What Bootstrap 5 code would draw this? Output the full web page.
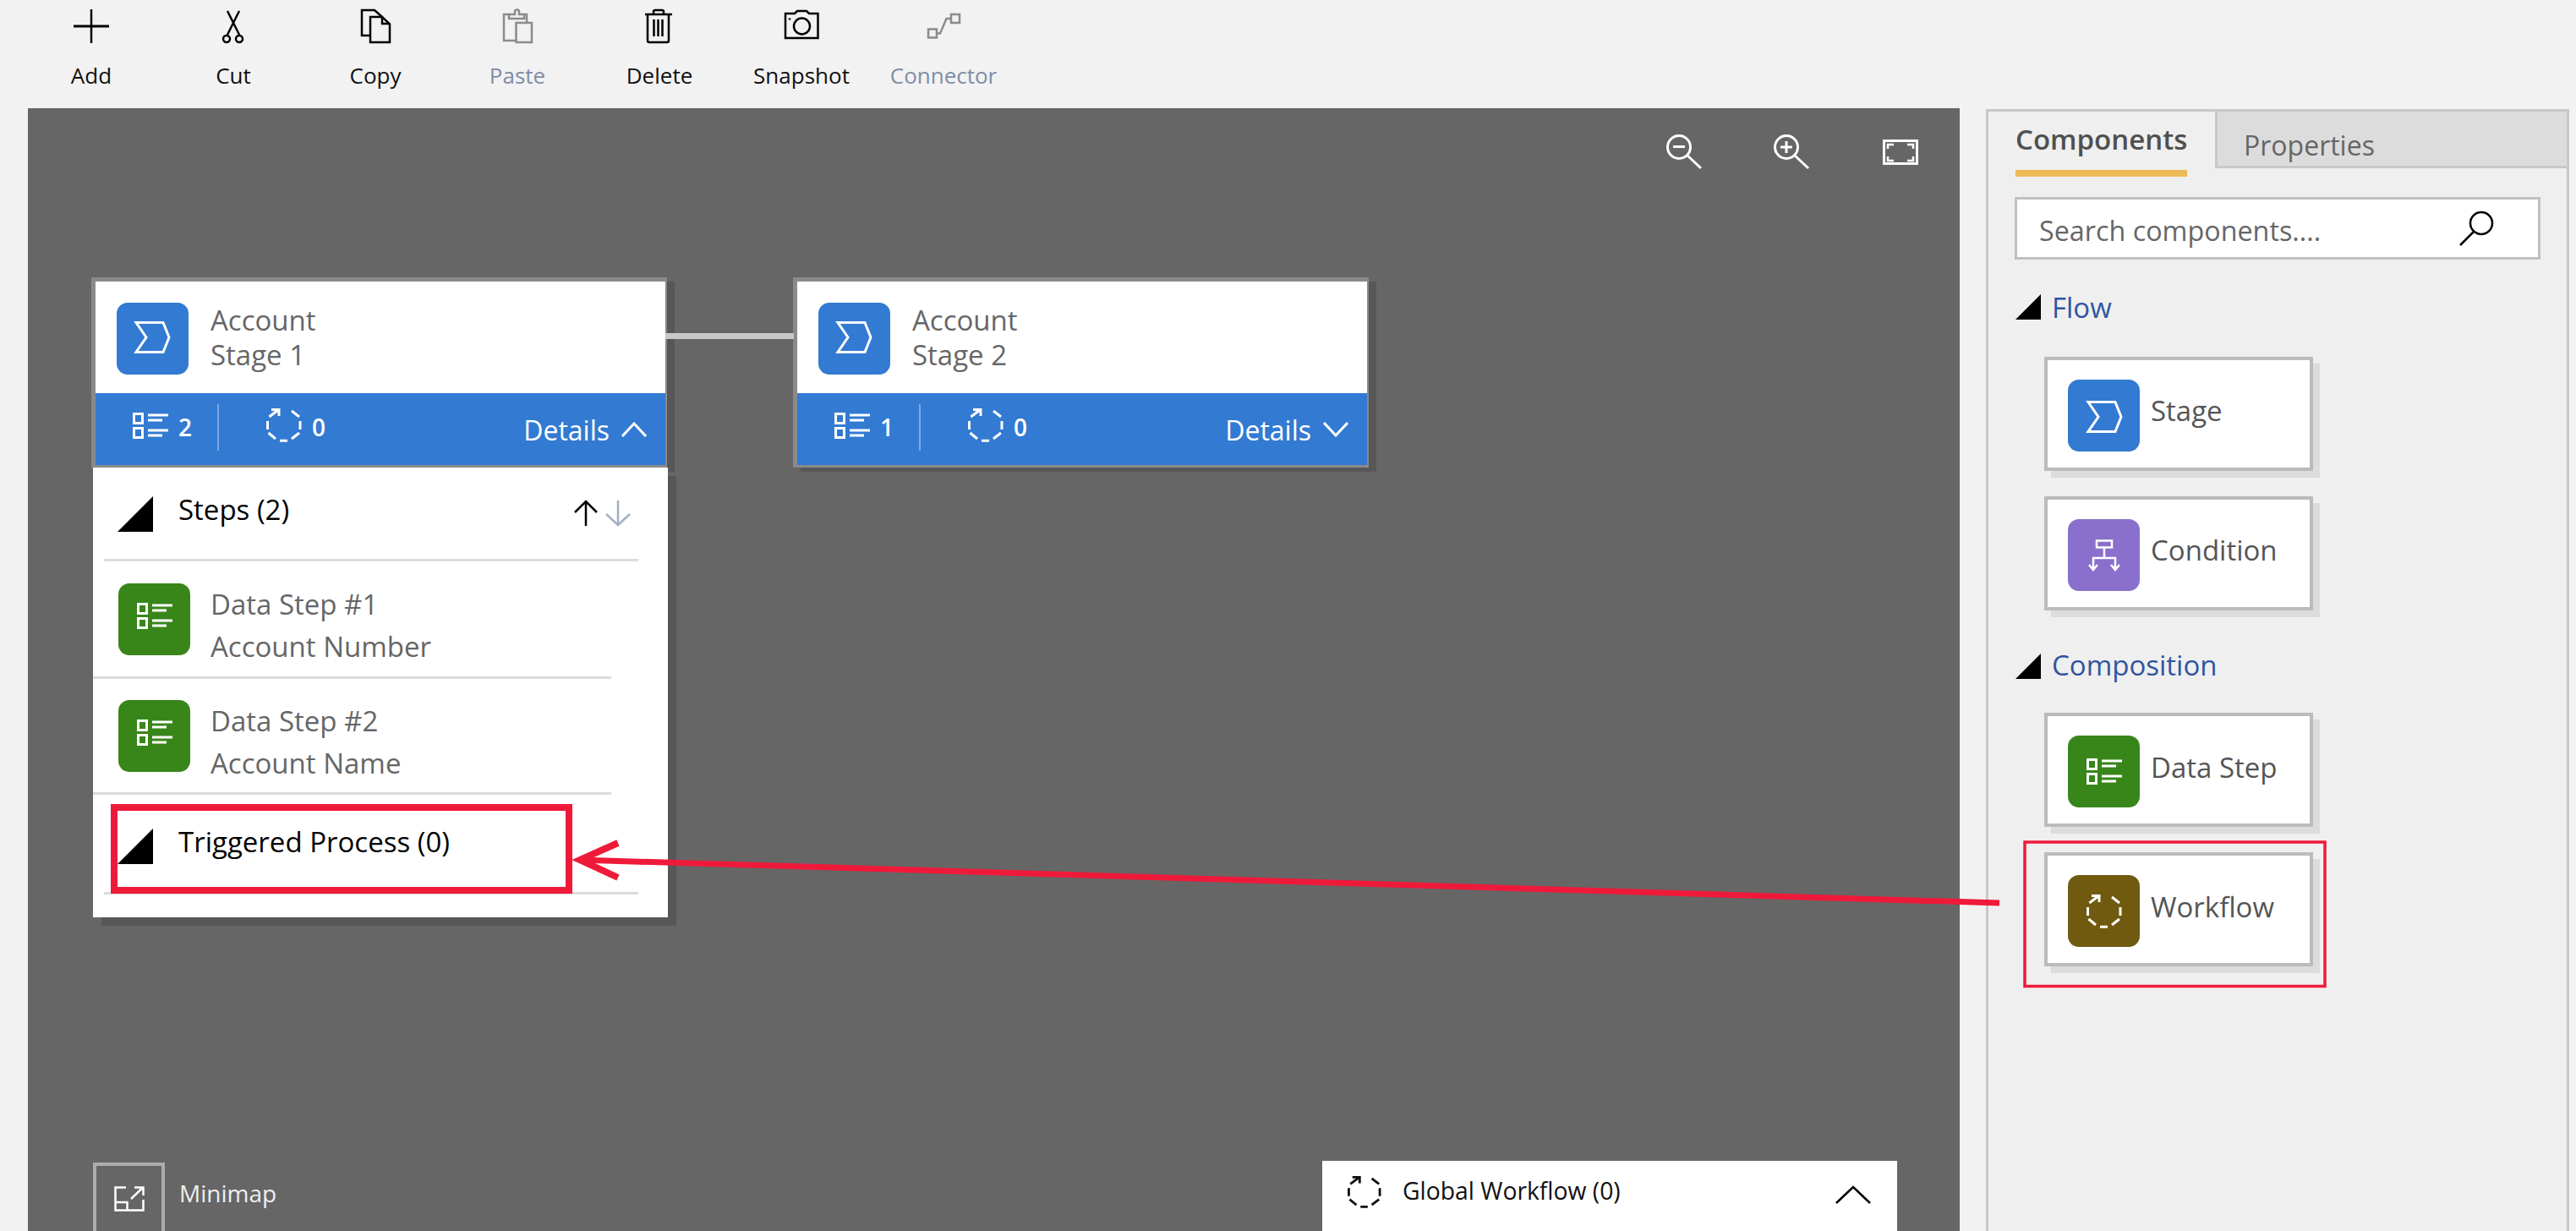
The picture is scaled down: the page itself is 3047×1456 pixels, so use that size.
<!DOCTYPE html>
<html lang="en">
<head>
  <meta charset="UTF-8" />
  <title>Business Process Flow Designer</title>
  <link href="https://cdn.jsdelivr.net/npm/bootstrap@5.3.3/dist/css/bootstrap.min.css" rel="stylesheet" />
  <style>
    html, body { margin: 0; height: 1456px; overflow: hidden; }
    body { background: #f2f2f2; font-family: "Open Sans", "Noto Sans", sans-serif; color: #111; position: relative; }
    svg { display: block; flex: none; }

    /* toolbar */
    .tool-bar { height: 128px; padding-left: 24px; }
    .tool-item { width: 168px; font-size: 26px; line-height: 36px; }
    .tool-item svg { margin: 0 auto 19px; }
    .tool-off { color: #7f8da6; }
    .tool-icon { fill: none; stroke: #000; stroke-width: 2.5; }
    .tool-icon-off { fill: none; stroke: #8b8b8b; stroke-width: 2.5; }

    /* canvas */
    .work-row { height: 1328px; padding-left: 33px; }
    .design-canvas { width: 2285px; background: #666; position: relative; overflow: hidden; }
    .zoom-tools { position: absolute; left: 1922px; top: 25px; }
    .line-link { position: absolute; left: 754px; top: 266px; width: 152px; height: 7px; background: #c8c8c8; z-index: 2; }
    .stage-node { position: absolute; top: 200px; }
    .stage-one { left: 75px; }
    .stage-two { left: 905px; }
    .stage-box { width: 681px; height: 225px; border: solid #8a8a8a; border-width: 5px 2px 3px 5px; background: #fff; box-shadow: 9px 5px 0 #575757; position: relative; }
    .stage-top { height: 132px; padding: 25px 0 0 25px; gap: 26px; }
    .tile { width: 85px; height: 85px; border-radius: 13px; flex: none; }
    .tile-blue { background: #327ad2; }
    .tile-green { background: #38861a; }
    .tile-purple { background: #8a70cc; }
    .tile-brown { background: #705a10; }
    .tile-high { align-items: flex-start !important; padding-top: 23px; }
    .stage-name { font-size: 33px; line-height: 41px; color: #666; }
    .stage-bar { height: 85px; background: #337ad2; color: #fff; }
    .bar-steps { margin: 23px 0 0 44px; }
    .bar-num { font-size: 28px; font-weight: 600; line-height: 30px; margin: 25px 0 0 12px; }
    .bar-split { width: 2px; height: 55px; background: #80a8e0; margin: 13px 0 0 30px; }
    .bar-flow { margin: 18px 0 0 56px; }
    .bar-details { font-size: 32px; line-height: 40px; margin: 24px 22px 0 auto; gap: 14px; }
    .bar-details svg { margin-top: 10px; }

    .stage-panel { width: 680px; height: 532px; margin-left: 2px; background: #fff; box-shadow: 10px 10px 0 #575757; position: relative; }
    .sect-head { font-size: 33px; line-height: 40px; color: #000; }
    .sect-head span { margin-top: -4px; }
    .sect-tri { margin-right: 30px; }
    .sect-steps { height: 108px; padding: 34px 35px 0 29px; }
    .sect-arrows { margin: 3px 6px 0 auto; }
    .sect-line { height: 3px; background: #dcdcdc; margin: 0 35px 0 13px; }
    .step-row { height: 136px; padding: 26px 0 0 30px; gap: 24px; }
    .step-row-two { height: 134px; padding-top: 25px; }
    .step-name { font-size: 33px; line-height: 50px; color: #666; }
    .step-line { height: 3px; width: 613px; background: #dcdcdc; }
    .sect-trigger { height: 115px; padding: 40px 0 0 29px; }

    .mini-map { position: absolute; left: 77px; bottom: 0; color: #eee; font-size: 28px; }
    .mini-box { width: 85px; height: 81px; border: solid #adadad; border-width: 4px 4px 0 4px; }
    .mini-label { margin: -10px 0 0 17px; }
    .global-flow { position: absolute; left: 1531px; top: 1245px; width: 680px; height: 83px; background: #fff; padding: 17px 31px 0 30px; font-size: 28.3px; color: #111; }
    .global-label { line-height: 36px; margin-left: 25px; }
    .global-arrow { margin: 12px 0 0 auto; }

    /* right panel */
    .side-panel { width: 690px; margin-left: 31px; margin-top: 1px; background: #efefef; border: solid #c8c8c8; border-width: 3px 3px 0 3px; }
    .tab-row { height: 67px; }
    .tab-on { width: 268px; height: 67px; padding: 8px 0 0 32px; font-size: 33px; font-weight: 600; color: #505050; }
    .tab-on span { display: inline-block; line-height: 40px; padding-bottom: 16px; border-bottom: 8px solid #edba57; }
    .tab-off { height: 67px; background: #dcdcdc; border-left: 3px solid #c8c8c8; border-bottom: 3px solid #c8c8c8; padding: 20px 0 0 31px; font-size: 32px; line-height: 40px; color: #666; }
    .search-box { width: 622px; height: 74px; margin: 34px 0 0 31px; background: #fff; border: 3px solid #c0c0c0; padding-right: 52px; }
    .search-box .form-control { border: 0; border-radius: 0; background: transparent; box-shadow: none; font-size: 32.3px; padding: 4px 0 0 26px; color: #666; font-family: inherit; }
    .search-box .form-control::placeholder { color: #666; opacity: 1; }
    .group-head { margin: 41px 0 0 32px; gap: 13px; font-size: 33px; line-height: 36px; color: #2f55a0; }
    .group-head span { margin-top: -2px; }
    .group-two { margin-top: 51px; }
    .group-two span { margin-top: -4px; }
    .comp-card { width: 318px; height: 135px; margin: 30px 0 0 66px; background: #fff; border: 4px solid #bbb; box-shadow: 8px 8px 0 #dcdcdc; padding: 23px 0 0 24px; gap: 13px; font-size: 33px; color: #555; }
    .comp-name { line-height: 40px; margin-top: 17px; }
    .comp-name-low { margin-top: 18px; }
    .comp-first { margin-top: 40px; }
    .comp-first-two { margin-top: 38px; }

    .mark-layer { position: absolute; left: 0; top: 0; pointer-events: none; z-index: 5; }
  </style>
</head>
<body>
  <svg width="0" height="0" class="position-absolute">
    <defs>
      <symbol id="ico-steps" viewBox="0 0 42 31">
        <path d="M1.500 1.500h10v11h-10zM1.500 18.500h10v11h-10zM18 3h24M18 9h17M18 21h24M18 27h17" fill="none" stroke="currentColor" stroke-width="3"/>
      </symbol>
      <symbol id="ico-flow" viewBox="0 0 42 40">
        <path d="M30 3l9 7M40 15v10M39 29l-9 7M25 38.300h-9M11 36l-8.500-7M1.500 25V15M3.400 10L14 2M6 1.500h9V9" fill="none" stroke="currentColor" stroke-width="3"/>
      </symbol>
      <symbol id="ico-stage" viewBox="0 0 85 85">
        <path d="M23 23.500h32l7 17.500-7 17.500H23l12-17.500z" fill="none" stroke="#fff" stroke-width="3"/>
      </symbol>
      <symbol id="ico-tri" viewBox="0 0 42 42">
        <path d="M42 0V42H0z" fill="currentColor"/>
      </symbol>
    </defs>
  </svg>

  <!-- Barra de herramientas -->
  <div class="tool-bar d-flex">
    <div class="tool-item text-center">
      <svg width="60" height="52" viewBox="78 0 60 52" class="tool-icon"><path d="M108 11v40"/><path d="M87 31h42" stroke-width="3"/></svg>
      Add
    </div>
    <div class="tool-item text-center">
      <svg width="60" height="52" viewBox="246 0 60 52" class="tool-icon"><path d="M269 13l14 28M283 13l-14 28"/><circle cx="268" cy="46" r="4"/><circle cx="283" cy="46" r="4"/></svg>
      Cut
    </div>
    <div class="tool-item text-center">
      <svg width="60" height="52" viewBox="414 0 60 52" class="tool-icon"><path d="M437 42h-9V12h15l9 8"/><path d="M438 20h14l9 8.500V50h-23z"/><path d="M452 20v8h9"/></svg>
      Copy
    </div>
    <div class="tool-item text-center tool-off">
      <svg width="60" height="52" viewBox="582 0 60 52" class="tool-icon-off"><path d="M610 48h-14V17h6M616 17h7v9M602 17v5h18v-5h-6v-3a2.500 2.500 0 0 0-5 0v3z"/><path d="M610.500 27h18.500v23h-18.500z"/></svg>
      Paste
    </div>
    <div class="tool-item text-center">
      <svg width="60" height="52" viewBox="750 0 60 52" class="tool-icon"><path d="M763 17h32M773 16v-2a2 2 0 0 1 2-2h8a2 2 0 0 1 2 2v2"/><path d="M766 17v31a2 2 0 0 0 2 2h21a2 2 0 0 0 2-2V17"/><path d="M773.500 23v20M778.500 23v20M783.500 23v20"/></svg>
      Delete
    </div>
    <div class="tool-item text-center">
      <svg width="60" height="52" viewBox="918 0 60 52" class="tool-icon"><path d="M929 16v29h38.500V16H957l-3-3h-11l-3 3z"/><circle cx="948.500" cy="31" r="9.500"/><path d="M934 21.500v2"/></svg>
      Snapshot
    </div>
    <div class="tool-item text-center tool-off">
      <svg width="60" height="52" viewBox="1086 0 60 52" class="tool-icon-off"><path d="M1098 34.500h10v10h-10zM1125 17h10v10h-10zM1108 39.500h4l7.500-17.500h5.500"/></svg>
      Connector
    </div>
  </div>

  <div class="work-row d-flex">
    <!-- Lienzo -->
    <div class="design-canvas">
      <svg class="zoom-tools" width="320" height="50" viewBox="1955 153 320 50" fill="none" stroke="#fff" stroke-width="3">
        <circle cx="1986" cy="174" r="13.500"/><path d="M1996 184l16 15M1979 173.500h14"/>
        <circle cx="2113" cy="174" r="13.500"/><path d="M2123 184l16 15M2106 174h14M2113 167v14"/>
        <path d="M2228.500 166.500h39v27h-39z"/><path d="M2233 176v-5h7M2256 171h7v5M2263 185v5h-7M2240 190h-7v-5" stroke-width="2.500"/>
      </svg>

      <div class="line-link"></div>

      <div class="stage-node stage-one">
        <div class="stage-box">
          <div class="stage-top d-flex">
            <svg class="tile tile-blue"><use href="#ico-stage"/></svg>
            <div class="stage-name">Account<br>Stage 1</div>
          </div>
          <div class="stage-bar d-flex align-items-start">
            <svg width="42" height="31" class="bar-steps"><use href="#ico-steps"/></svg>
            <div class="bar-num">2</div>
            <div class="bar-split"></div>
            <svg width="42" height="40" class="bar-flow"><use href="#ico-flow"/></svg>
            <div class="bar-num">0</div>
            <div class="bar-details d-flex align-items-start">Details
              <svg width="30" height="18" viewBox="0 0 30 18" fill="none" stroke="#fff" stroke-width="3"><path d="M1 17L15 2l14 15"/></svg>
            </div>
          </div>
        </div>
        <div class="stage-panel">
          <div class="sect-head sect-steps d-flex align-items-start">
            <svg width="42" height="42" class="sect-tri"><use href="#ico-tri"/></svg>
            <span>Steps (2)</span>
            <svg class="sect-arrows" width="70" height="34" viewBox="0 0 70 34" fill="none" stroke-width="2.500">
              <path d="M14 32V3M1 16L14 3l13 13" stroke="#000"/>
              <path d="M52 2v29M38 18l14 13 14-13" stroke="#a3afc6"/>
            </svg>
          </div>
          <div class="sect-line"></div>
          <div class="step-row d-flex">
            <div class="tile tile-green tile-high d-flex justify-content-center"><svg width="42" height="31" class="text-white"><use href="#ico-steps"/></svg></div>
            <div class="step-name">Data Step #1<br>Account Number</div>
          </div>
          <div class="step-line"></div>
          <div class="step-row step-row-two d-flex">
            <div class="tile tile-green tile-high d-flex justify-content-center"><svg width="42" height="31" class="text-white"><use href="#ico-steps"/></svg></div>
            <div class="step-name">Data Step #2<br>Account Name</div>
          </div>
          <div class="step-line"></div>
          <div class="sect-head sect-trigger d-flex align-items-start">
            <svg width="42" height="42" class="sect-tri"><use href="#ico-tri"/></svg>
            <span>Triggered Process (0)</span>
          </div>
          <div class="sect-line"></div>
        </div>
      </div>

      <div class="stage-node stage-two">
        <div class="stage-box">
          <div class="stage-top d-flex">
            <svg class="tile tile-blue"><use href="#ico-stage"/></svg>
            <div class="stage-name">Account<br>Stage 2</div>
          </div>
          <div class="stage-bar d-flex align-items-start">
            <svg width="42" height="31" class="bar-steps"><use href="#ico-steps"/></svg>
            <div class="bar-num">1</div>
            <div class="bar-split"></div>
            <svg width="42" height="40" class="bar-flow"><use href="#ico-flow"/></svg>
            <div class="bar-num">0</div>
            <div class="bar-details d-flex align-items-start">Details
              <svg width="30" height="18" viewBox="0 0 30 18" fill="none" stroke="#fff" stroke-width="3"><path d="M1 1l14 15L29 1"/></svg>
            </div>
          </div>
        </div>
      </div>

      <div class="mini-map d-flex align-items-center">
        <div class="mini-box d-flex align-items-center justify-content-center">
          <svg width="36" height="30" viewBox="0 0 36 30" fill="none" stroke="#fff" stroke-width="2.500"><path d="M14 1.500H1.500v27h33V16M1.500 19h14v9.500M20 15L34 1.500M24 1.500h10.500V11"/></svg>
        </div>
        <span class="mini-label">Minimap</span>
      </div>

      <div class="global-flow d-flex align-items-start">
        <svg width="40" height="40"><use href="#ico-flow"/></svg>
        <span class="global-label">Global Workflow (0)</span>
        <svg class="global-arrow" width="42" height="22" viewBox="0 0 42 22" fill="none" stroke="#000" stroke-width="2.500"><path d="M1 21L21 2l20 19"/></svg>
      </div>
    </div>

    <!-- Panel derecho -->
    <div class="side-panel">
      <div class="tab-row d-flex">
        <div class="tab-on"><span>Components</span></div>
        <div class="tab-off flex-grow-1">Properties</div>
      </div>
      <div class="search-box d-flex align-items-center">
        <input type="text" class="form-control" placeholder="Search components....">
        <svg width="42" height="42" viewBox="0 0 42 42" fill="none" stroke="#000" stroke-width="2.500"><circle cx="27" cy="15" r="13"/><path d="M18 25L2 41"/></svg>
      </div>

      <div class="group-head d-flex align-items-start">
        <svg width="30" height="30" class="text-black"><use href="#ico-tri"/></svg>
        <span>Flow</span>
      </div>
      <div class="comp-card comp-first d-flex">
        <svg class="tile tile-blue"><use href="#ico-stage" x="1" y="3"/></svg>
        <div class="comp-name">Stage</div>
      </div>
      <div class="comp-card d-flex">
        <div class="tile tile-purple d-flex align-items-center justify-content-center">
          <svg width="38" height="38" viewBox="0 0 38 38" fill="none" stroke="#fff" stroke-width="2.500"><path d="M10 1.500h18v8H10zM19 9.500V22M6 36V22h26v14M1 30l5 6 5-6M27 30l5 6 5-6"/></svg>
        </div>
        <div class="comp-name">Condition</div>
      </div>

      <div class="group-head group-two d-flex align-items-start">
        <svg width="30" height="30" class="text-black"><use href="#ico-tri"/></svg>
        <span>Composition</span>
      </div>
      <div class="comp-card comp-first-two d-flex">
        <div class="tile tile-green d-flex align-items-center justify-content-center"><svg width="42" height="31" class="text-white"><use href="#ico-steps"/></svg></div>
        <div class="comp-name comp-name-low">Data Step</div>
      </div>
      <div class="comp-card d-flex">
        <div class="tile tile-brown d-flex align-items-center justify-content-center"><svg width="42" height="40" class="text-white"><use href="#ico-flow"/></svg></div>
        <div class="comp-name comp-name-low">Workflow</div>
      </div>
    </div>
  </div>

  <!-- Anotaciones rojas -->
  <svg class="mark-layer" width="3047" height="1456" viewBox="0 0 3047 1456" fill="none" stroke="#ef1a3a">
    <rect x="135" y="955" width="538" height="98" stroke-width="8"/>
    <path d="M685 1017L2365 1068" stroke-width="7"/>
    <path d="M731 997L686 1017l45 21" stroke-width="8"/>
    <rect x="2395" y="996" width="355" height="170.500" stroke-width="3.500"/>
  </svg>

  <script src="https://cdn.jsdelivr.net/npm/bootstrap@5.3.3/dist/js/bootstrap.bundle.min.js"></script>
</body>
</html>
